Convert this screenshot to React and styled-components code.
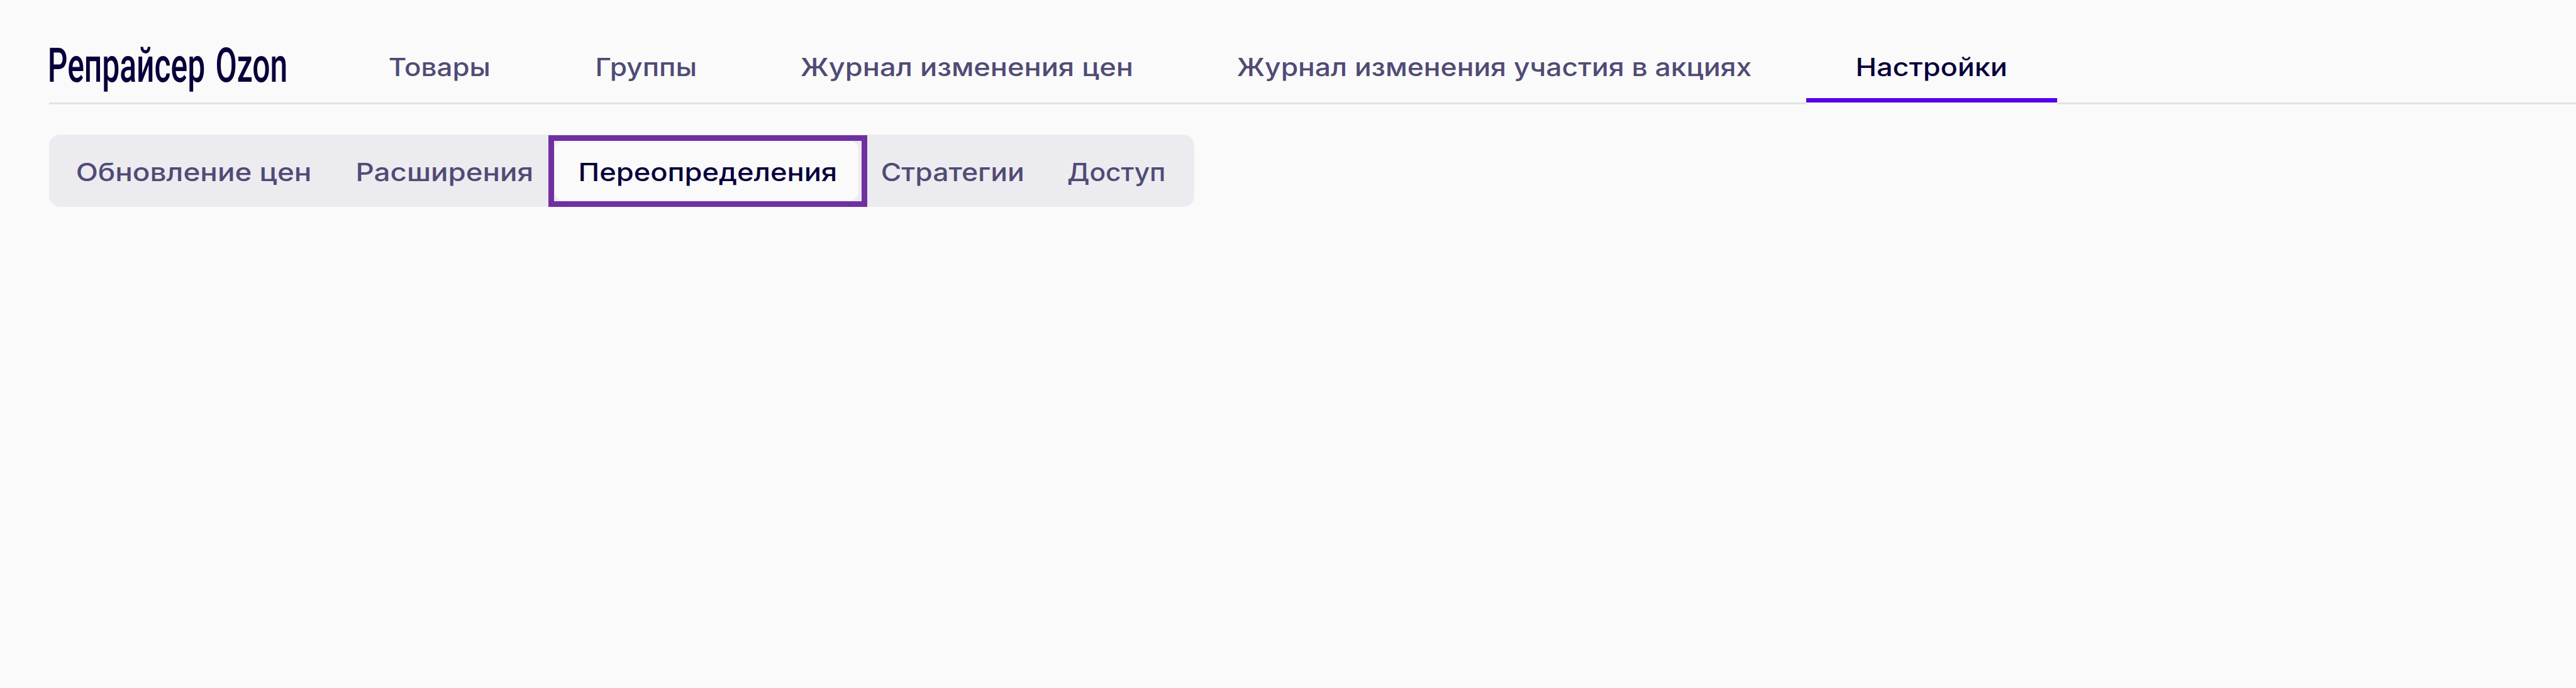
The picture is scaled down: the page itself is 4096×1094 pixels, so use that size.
import React, { useLayoutEffect, useRef, useState } from 'react';
import styled, { createGlobalStyle } from 'styled-components';

const GlobalStyle = createGlobalStyle`
  body {
    margin: 0;
    background: #fafafa;
  }
`

const Page = styled.div`
  box-sizing: border-box;
  min-height: 1094px;
  padding: 50px 0 0 77.5px;
  background: #fafafa;
  color: #504b75;
  font-family: Inter, 'Noto Sans', sans-serif;
  font-size: 39px;
  font-weight: 450;
  overflow: hidden;
`

const Header = styled.header`
  display: flex;
  height: 113px;
  border-bottom: 3.5px solid #e2e1e5;
`

const Title = styled.h1`
  display: flex;
  align-items: center;
  box-sizing: border-box;
  width: 460px;
  margin: 0;
  padding: 0 0 6px 1.5px;
  color: #07003a;
  font-family: Roboto, sans-serif;
  font-size: 76px;
  font-weight: 550;
  word-spacing: 6px;
`

const Tabs = styled.nav`
  display: flex;
`

const Tab = styled.div`
  display: flex;
  align-items: center;
  box-sizing: border-box;
  height: 113px;
  margin-left: ${props => props.$gap}px;
  padding: 0 82px;
  color: ${props => props.$active ? '#07003a' : 'inherit'};
  background: ${props => props.$active
    ? 'linear-gradient(#5500e8, #5500e8) bottom / 100% 7px no-repeat'
    : 'none'};
  box-shadow: ${props => props.$active ? '0 4px 0 #fafafa' : 'none'};
`

const Segments = styled.div`
  display: flex;
  align-items: center;
  box-sizing: border-box;
  width: 1821.5px;
  height: 115px;
  margin-top: 48px;
  border-radius: 18px;
  background: #ecebf0;
`

const Segment = styled.div`
  display: flex;
  align-items: center;
  box-sizing: border-box;
  height: 95px;
  margin-left: ${props => props.$gap}px;
  padding-top: 3px;
`

const ActiveSegment = styled(Segment)`
  position: relative;
  padding: 3px 36px 0 41px;
  border-radius: 14px;
  background: #fafafa;
  color: #07003a;
`

const Highlight = styled.span`
  position: absolute;
  top: -9.5px;
  right: -14.5px;
  bottom: -9.5px;
  left: -9.5px;
  border: 9.5px solid #7030a0;
`

const Word = styled.span`
  display: block;
  width: ${props => props.$width}px;
  white-space: nowrap;
`

const Glyphs = styled.span`
  display: inline-block;
  transform-origin: 0 50%;
`

// stretches the text so that its letters fill exactly the given width
const Label = ({ text, width }) => {
  const ref = useRef(null);
  const [transform, setTransform] = useState('none');

  useLayoutEffect(() => {
    const css = getComputedStyle(ref.current);
    const ctx = document.createElement('canvas').getContext('2d');
    ctx.font = `${css.fontWeight} ${css.fontSize} ${css.fontFamily}`;
    ctx.wordSpacing = css.wordSpacing;
    const m = ctx.measureText(text);
    const k = width / (m.actualBoundingBoxRight + m.actualBoundingBoxLeft);
    setTransform(`translateX(${m.actualBoundingBoxLeft * k}px) scaleX(${k})`);
  }, [text, width]);

  return (
    <Word $width={width}>
      <Glyphs ref={ref} style={{ transform }}>{text}</Glyphs>
    </Word>
  );
}

const tabs = [
  { text: 'Товары', width: 158, gap: -1 },
  { text: 'Группы', width: 155, gap: 9.5 },
  { text: 'Журнал изменения цен', width: 525, gap: 5 },
  { text: 'Журнал изменения участия в акциях', width: 816.5, gap: 5 },
  { text: 'Настройки', width: 235, gap: 5.5, active: true },
];

const segments = [
  { text: 'Обновление цен', width: 369.5, gap: 45.5 },
  { text: 'Расширения', width: 277, gap: 76 },
  { text: 'Переопределения', width: 406, gap: 36, active: true },
  { text: 'Стратегии', width: 223, gap: 38.5 },
  { text: 'Доступ', width: 153, gap: 71.5 },
];

const App = () => (
  <>
    <GlobalStyle />
    <Page>
      <Header>
        <Title><Label text="Репрайсер Ozon" width={375.5} /></Title>
        <Tabs>
          {tabs.map(tab => (
            <Tab key={tab.text} $gap={tab.gap} $active={tab.active}>
              <Label text={tab.text} width={tab.width} />
            </Tab>
          ))}
        </Tabs>
      </Header>
      <Segments>
        {segments.map(item => item.active ? (
          <ActiveSegment key={item.text} $gap={item.gap}>
            <Label text={item.text} width={item.width} />
            <Highlight />
          </ActiveSegment>
        ) : (
          <Segment key={item.text} $gap={item.gap}>
            <Label text={item.text} width={item.width} />
          </Segment>
        ))}
      </Segments>
    </Page>
  </>
);

export default App;
